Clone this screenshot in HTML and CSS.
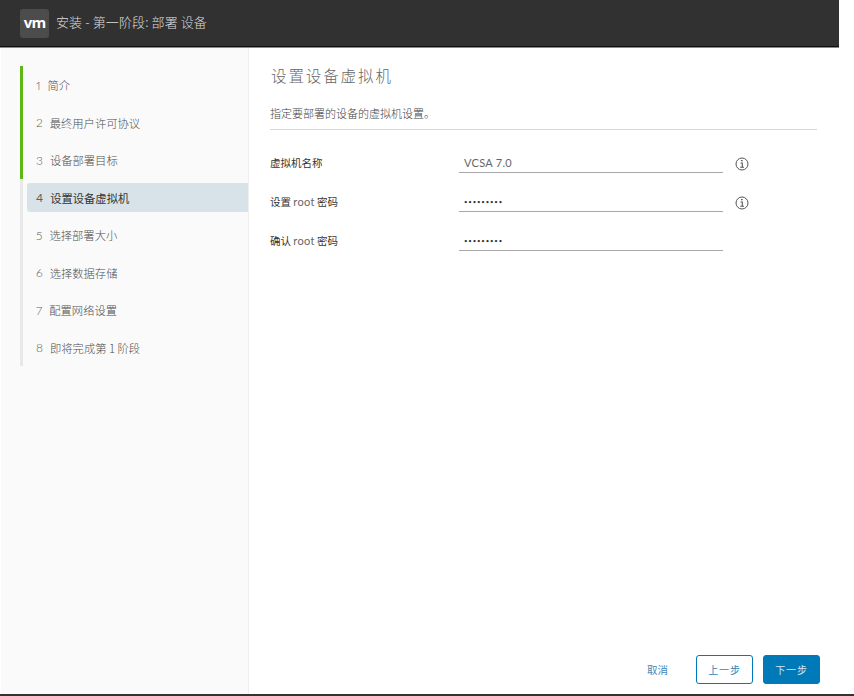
FILE: index.html
```html
<!DOCTYPE html>
<html lang="zh-CN">
<head>
<meta charset="utf-8">
<title>安装 - 第一阶段: 部署 设备</title>
<link rel="stylesheet" href="styles.css">
</head>
<body>
<div class="app">
  <header class="header">
    <div class="logo">vm</div>
    <div class="header-title">安装 - 第一阶段: 部署 设备</div>
  </header>
  <div class="body">
    <nav class="sidebar">
      <ol class="steps">
        <li class="step done"><span class="num">1</span><span>简介</span></li>
        <li class="step done"><span class="num">2</span><span>最终用户许可协议</span></li>
        <li class="step done"><span class="num">3</span><span>设备部署目标</span></li>
        <li class="step active"><span class="num">4</span><span>设置设备虚拟机</span></li>
        <li class="step"><span class="num">5</span><span>选择部署大小</span></li>
        <li class="step"><span class="num">6</span><span>选择数据存储</span></li>
        <li class="step"><span class="num">7</span><span>配置网络设置</span></li>
        <li class="step"><span class="num">8</span><span>即将完成第 1 阶段</span></li>
      </ol>
    </nav>
    <main class="main">
      <h1 class="title">设置设备虚拟机</h1>
      <p class="desc">指定要部署的设备的虚拟机设置。</p>
      <form class="form">
        <div class="row">
          <label class="label">虚拟机名称</label>
          <div class="input">VCSA 7.0</div>
          <svg class="info" viewBox="0 0 14 14" width="14" height="14"><circle cx="7" cy="7" r="6" fill="none" stroke="#555" stroke-width="1"/><path d="M6 3.6h1.6M5.6 6h1.7v4M5.2 10.3h3.8" fill="none" stroke="#555" stroke-width="1.1"/></svg>
        </div>
        <div class="row">
          <label class="label">设置 <span class="latin">root</span> 密码</label>
          <div class="input dots">•••••••••</div>
          <svg class="info" viewBox="0 0 14 14" width="14" height="14"><circle cx="7" cy="7" r="6" fill="none" stroke="#555" stroke-width="1"/><path d="M6 3.6h1.6M5.6 6h1.7v4M5.2 10.3h3.8" fill="none" stroke="#555" stroke-width="1.1"/></svg>
        </div>
        <div class="row">
          <label class="label">确认 <span class="latin">root</span> 密码</label>
          <div class="input dots">•••••••••</div>
        </div>
      </form>
      <footer class="footer">
        <span class="cancel">取消</span>
        <button class="btn" type="button">上一步</button>
        <button class="btn primary" type="button">下一步</button>
      </footer>
    </main>
  </div>
</div>
</body>
</html>
```
FILE: styles.css
```css
* { box-sizing: border-box; }
html, body { margin: 0; padding: 0; background: #fff; }
body {
  width: 854px;
  height: 696px;
  overflow: hidden;
  border-bottom: 2px solid #333;
  font-family: "Noto Sans CJK SC", "Noto Sans", sans-serif;
}
.app { width: 839px; height: 694px; display: flex; flex-direction: column; }
.header {
  height: 48px;
  flex: none;
  background: #313131;
  border-bottom: 1px solid #8a8a8a;
  box-shadow: inset 0 -1px 0 #111;
  display: flex;
  align-items: center;
  padding: 0 0 1px 20px;
}
.logo {
  width: 29px;
  height: 29px;
  background: #4c4c4c;
  border-radius: 3px;
  color: #fff;
  font: bold 15px/27px "Open Sans", sans-serif;
  letter-spacing: -0.8px;
  text-align: center;
}
.header-title {
  margin-left: 7px;
  padding-bottom: 3px;
  color: #dcdcdc;
  font-size: 13px;
  font-weight: 300;
  letter-spacing: 0.12px;
}
.body { flex: 1; display: flex; min-height: 0; }
.sidebar {
  width: 248px;
  flex: none;
  margin-left: 1px;
  background: #fafafa;
  border-right: 1px solid #eeeeee;
  padding: 18px 0 0 19px;
}
.steps { list-style: none; margin: 0; padding: 0; }
.step {
  height: 37.5px;
  border-left: 3px solid #e8e8e8;
  padding: 1px 0 0 13px;
  display: flex;
  align-items: center;
  font-size: 11.3px;
  font-weight: 300;
  color: #4f4f4f;
  position: relative;
}
.step.done { border-left-color: #5eb715; }
.num {
  margin-right: 7px;
  font-family: "Lato", sans-serif;
  font-size: 12px;
  font-variant-numeric: proportional-nums;
  color: #5f5f5f;
}
.step.active { color: #333; font-weight: 400; }
.step.active::before {
  content: "";
  position: absolute;
  left: 4px;
  right: 0;
  top: 4.5px;
  bottom: 4px;
  background: #d8e3e9;
  border-radius: 3px 0 0 3px;
}
.step.active span { position: relative; }
.main {
  flex: 1;
  padding: 0 22px 0 21px;
  display: flex;
  flex-direction: column;
}
.title {
  margin: 15px 0 0 1px;
  font-size: 15.5px;
  line-height: 24px;
  font-weight: 300;
  color: #666;
  letter-spacing: 1.9px;
}
.desc {
  margin: 18px 0 0;
  height: 25px;
  font-size: 11px;
  line-height: 17px;
  font-weight: 300;
  color: #444;
  border-bottom: 1px solid #d7d7d7;
  width: 547px;
}
.form { margin-top: 19px; display: flex; flex-direction: column; gap: 15px; }
.row { display: flex; align-items: center; height: 24px; position: relative; }
.label { width: 189px; padding-top: 2px; font-size: 10.5px; font-weight: 400; color: #333; }
.latin { font-family: "Lato", sans-serif; color: #666; font-size: 11px; letter-spacing: 0.3px; }
.input {
  width: 264px;
  height: 24px;
  padding-left: 5px;
  border-bottom: 1px solid #a8a8a8;
  font: 11px/28px "Lato", sans-serif;
  letter-spacing: 0.3px;
  color: #666;
}
.dots { font-size: 6px; line-height: 27px; letter-spacing: 0.85px; color: #333; }
.info { margin: 6px 0 0 12px; flex: none; }
.footer {
  margin-top: auto;
  margin-bottom: 10px;
  margin-right: -3px;
  display: flex;
  align-items: center;
  justify-content: flex-end;
  gap: 10px;
}
.cancel { font-size: 10.5px; color: #3f87b5; margin-right: 18px; }
.btn {
  width: 57px;
  height: 29px;
  padding: 0;
  border: 1px solid #0079b8;
  border-radius: 3px;
  background: #fff;
  color: #2a86bb;
  font: 400 10px "Noto Sans CJK SC", sans-serif;
  letter-spacing: 0.8px;
}
.btn.primary { background: #0079b8; color: #d5e7f2; }
```
